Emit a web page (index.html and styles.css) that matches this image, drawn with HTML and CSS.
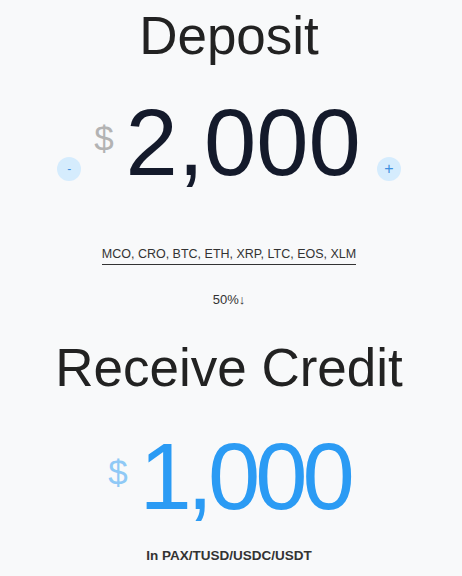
FILE: index.html
```html
<!DOCTYPE html>
<html lang="en">
<head>
    <meta charset="UTF-8">
    <meta name="viewport" content="width=device-width, initial-scale=1.0">
    <title>Deposit</title>
    <link rel="stylesheet" href="styles.css">
</head>
<body>

    <div class="page">
        <!-- Deposit -->
        <h1 class="title title-deposit">Deposit</h1>

        <div class="amount-row">
            <button class="step-button step-minus">-</button>
            <span class="currency">$</span>
            <span class="amount">2,000</span>
            <button class="step-button step-plus">+</button>
        </div>

        <div class="coins">MCO, CRO, BTC, ETH, XRP, LTC, EOS, XLM</div>

        <div class="rate">50%↓</div>

        <!-- Receive Credit -->
        <h1 class="title title-receive">Receive Credit</h1>

        <div class="amount-row amount-credit">
            <span class="currency">$</span>
            <span class="amount">1,000</span>
        </div>

        <div class="stablecoins">In PAX/TUSD/USDC/USDT</div>
    </div>

</body>
</html>
```

FILE: styles.css
```css
body {
    margin: 0;
    padding: 0;
    background-color: #f8f9fa;
    font-family: 'Liberation Sans', Arial, sans-serif;
    color: #222;
}

.page {
    display: flex;
    flex-direction: column;
    align-items: center;
    padding-right: 4px;
}

.title {
    margin: 0;
    font-size: 53px;
    font-weight: normal;
    line-height: 1;
    color: #222;
}

.title-deposit {
    margin-top: 9px;
}

.title-receive {
    margin-top: 34px;
}

/* Ligne du montant */
.amount-row {
    display: flex;
    align-items: flex-end;
    margin-top: 34px;
}

.amount {
    font-size: 94px;
    line-height: 1;
    color: #141a2b;
}

.currency {
    align-self: flex-start;
    font-size: 35px;
    line-height: 1;
    margin-top: 25px;
    margin-right: 12px;
    color: #b3b3b3;
}

.step-button {
    width: 24px;
    height: 24px;
    margin-bottom: 9px;
    padding: 0;
    border: none;
    border-radius: 50%;
    background-color: #d5ecfd;
    color: #3d8fe0;
    font-family: 'Liberation Sans', Arial, sans-serif;
    font-size: 16px;
    line-height: 24px;
    text-align: center;
}

.step-minus {
    margin-right: 13px;
    font-size: 12px;
}

.step-plus {
    margin-left: 16px;
}

.coins {
    margin-top: 57px;
    padding-bottom: 3px;
    border-bottom: 1px solid #333;
    font-size: 12.5px;
    color: #333;
}

.rate {
    margin-top: 27px;
    font-size: 13px;
    color: #333;
}

/* Montant crédité */
.amount-credit {
    margin-top: 36px;
}

.amount-credit .amount {
    color: #2b9bf4;
    letter-spacing: -5px;
}

.amount-credit .currency {
    color: #8fc9f6;
}

.stablecoins {
    margin-top: 24px;
    font-size: 13.5px;
    font-weight: bold;
    color: #333;
}
```
